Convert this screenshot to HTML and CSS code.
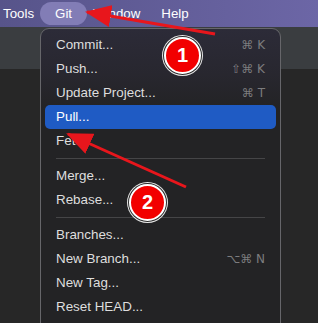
FILE: index.html
```html
<!DOCTYPE html>
<html lang="en">
<head>
    <meta charset="UTF-8">
    <meta name="viewport" content="width=device-width, initial-scale=1.0">
    <title>Git menu</title>
    <link rel="stylesheet" href="styles.css">
</head>
<body>
    <div class="screen">
        <nav class="menubar">
            <span class="menubar-item">Tools</span>
            <span class="menubar-item active">Git</span>
            <span class="menubar-item">Window</span>
            <span class="menubar-item">Help</span>
        </nav>
        <div class="toolbar"></div>
        <div class="editor"></div>

        <!-- dropdown for the Git menu -->
        <ul class="menu">
            <li class="menu-item"><span>Commit...</span><span class="shortcut">⌘ K</span></li>
            <li class="menu-item"><span>Push...</span><span class="shortcut">⇧⌘ K</span></li>
            <li class="menu-item"><span>Update Project...</span><span class="shortcut">⌘ T</span></li>
            <li class="menu-item selected"><span>Pull...</span></li>
            <li class="menu-item"><span>Fetch</span></li>
            <li class="separator"></li>
            <li class="menu-item"><span>Merge...</span></li>
            <li class="menu-item"><span>Rebase...</span></li>
            <li class="separator"></li>
            <li class="menu-item"><span>Branches...</span></li>
            <li class="menu-item"><span>New Branch...</span><span class="shortcut">⌥⌘ N</span></li>
            <li class="menu-item"><span>New Tag...</span></li>
            <li class="menu-item"><span>Reset HEAD...</span></li>
        </ul>

        <!-- annotations -->
        <svg class="arrows" width="318" height="323" viewBox="0 0 318 323">
            <defs>
                <marker id="head" markerUnits="userSpaceOnUse" markerWidth="26" markerHeight="22"
                        refX="24" refY="11" orient="auto" viewBox="0 0 26 22">
                    <path d="M0 0 L26 11 L0 22 Z" fill="#e8161c"/>
                </marker>
            </defs>
            <line x1="215" y1="34" x2="87" y2="12" stroke="#e8161c" stroke-width="3" marker-end="url(#head)"/>
            <line x1="186" y1="187" x2="68" y2="134" stroke="#e8161c" stroke-width="3" marker-end="url(#head)"/>
        </svg>
        <span class="badge badge-one">1</span>
        <span class="badge badge-two">2</span>
    </div>
</body>
</html>
```

FILE: styles.css
```css
body {
    margin: 0;
    padding: 0;
    font-family: "Liberation Sans", Arial, sans-serif;
    background-color: #2b2b2b;
}
.screen {
    position: relative;
    width: 318px;
    height: 323px;
    overflow: hidden;
    background-color: #2b2b2b;
}
.menubar {
    height: 27px;
    display: flex;
    align-items: center;
    gap: 21px;
    padding-left: 3px;
    background: linear-gradient(to right, #57548a, #6c66a6);
    color: #fff;
    font-size: 13.3px;
}
.menubar-item {
    line-height: 23px;
}
.menubar-item.active {
    padding: 0 15px;
    margin: 0 -15px;
    border-radius: 12px;
    background-color: #827db6;
}
.toolbar {
    height: 42px;
    background-color: #3a3d40;
}
.editor {
    height: 254px;
    background-color: #272727;
}
.menu {
    position: absolute;
    left: 40px;
    top: 28px;
    width: 231px;
    height: 310px;
    margin: 0;
    padding: 4px;
    list-style: none;
    border: 1px solid #66666a;
    border-radius: 9px;
    background: linear-gradient(to bottom, #2c2b38 0px, #28272f 45px, #232325 80px);
    font-size: 13.4px;
    color: #dedede;
}
.menu-item {
    display: flex;
    justify-content: space-between;
    padding: 0 11px;
    line-height: 24px;
    height: 24px;
    border-radius: 5px;
}
.menu-item.selected {
    background-color: #1f5bc4;
    color: #fff;
}
.shortcut {
    color: #7c7c7e;
    font-family: "DejaVu Sans", sans-serif;
    font-size: 12px;
}
.separator {
    height: 1px;
    margin: 5px 11px;
    background-color: #454547;
}
.arrows {
    position: absolute;
    left: 0;
    top: 0;
}
.badge {
    position: absolute;
    width: 33px;
    height: 33px;
    border: 2px solid #fff;
    border-radius: 50%;
    box-shadow: 0 0 0 1px #2a2a2a, 0 0 0 2px #e8e8e8;
    background-color: #f20000;
    color: #fff;
    font-size: 20px;
    font-weight: bold;
    line-height: 33px;
    text-align: center;
}
.badge-one {
    left: 164px;
    top: 37px;
}
.badge-two {
    left: 129px;
    top: 184px;
}
```
